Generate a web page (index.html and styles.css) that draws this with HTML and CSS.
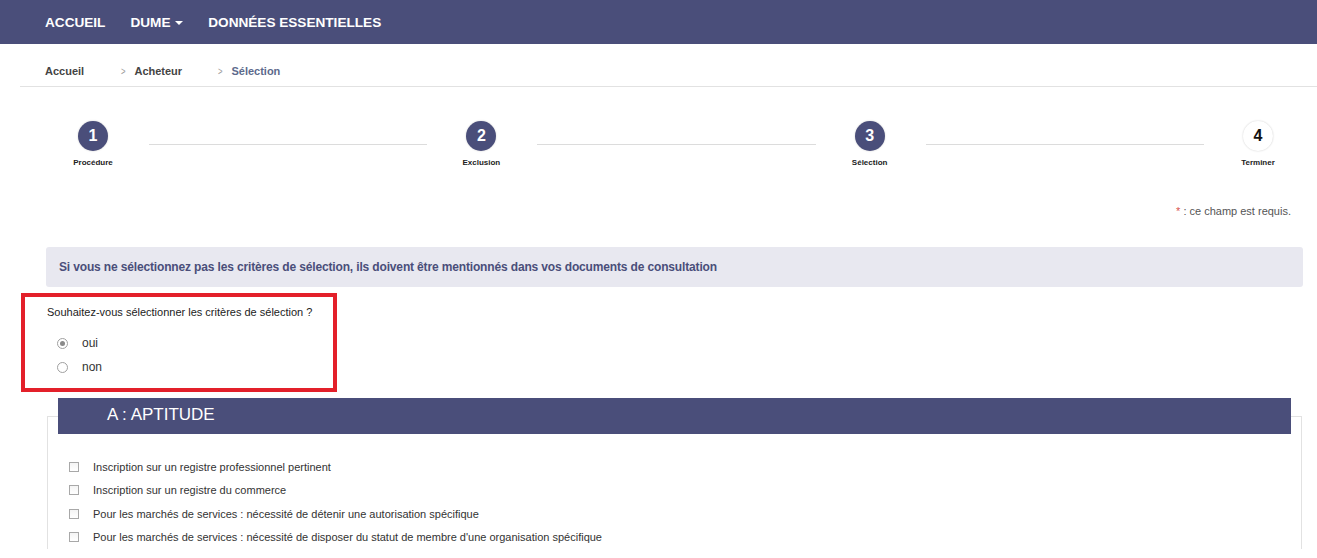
FILE: index.html
```html
<!DOCTYPE html>
<html lang="fr">
<head>
    <meta charset="UTF-8">
    <title>DUME - Sélection</title>
    <link rel="stylesheet" href="styles.css">
</head>
<body>
    <nav class="navbar">
        <a href="#">Accueil</a>
        <a href="#">Dume <span class="caret"></span></a>
        <a href="#">Données essentielles</a>
    </nav>

    <div class="page">
        <div class="breadcrumb">
            <span class="crumb">Accueil</span>
            <span class="crumb"><span class="sep">&gt;</span>Acheteur</span>
            <span class="crumb active"><span class="sep">&gt;</span>Sélection</span>
        </div>

        <div class="stepper">
            <div class="step done"><div class="circle">1</div><div class="step-label">Procédure</div></div>
            <div class="line"></div>
            <div class="step done"><div class="circle">2</div><div class="step-label">Exclusion</div></div>
            <div class="line"></div>
            <div class="step done"><div class="circle">3</div><div class="step-label">Sélection</div></div>
            <div class="line"></div>
            <div class="step"><div class="circle">4</div><div class="step-label">Terminer</div></div>
        </div>

        <p class="required-note"><span class="star">*</span> : ce champ est requis.</p>

        <div class="info">Si vous ne sélectionnez pas les critères de sélection, ils doivent être mentionnés dans vos documents de consultation</div>

        <div class="question">
            <p>Souhaitez-vous sélectionner les critères de sélection ?</p>
            <label class="radio"><input type="radio" name="sel" checked> oui</label>
            <label class="radio"><input type="radio" name="sel"> non</label>
        </div>

        <div class="section">
            <h3 class="section-title">A : APTITUDE</h3>
            <div class="criteria">
                <label class="check"><input type="checkbox"> Inscription sur un registre professionnel pertinent</label>
                <label class="check"><input type="checkbox"> Inscription sur un registre du commerce</label>
                <label class="check"><input type="checkbox"> Pour les marchés de services : nécessité de détenir une autorisation spécifique</label>
                <label class="check"><input type="checkbox"> Pour les marchés de services : nécessité de disposer du statut de membre d'une organisation spécifique</label>
            </div>
        </div>
    </div>
</body>
</html>
```

FILE: styles.css
```css
body {
    margin: 0;
    font-family: "Liberation Sans", Arial, sans-serif;
    color: #333;
    background: #fff;
}
.navbar {
    background-color: #4a4e7a;
    height: 44px;
    display: flex;
    align-items: center;
    padding-left: 45px;
    gap: 25px;
}
.navbar a {
    color: #fff;
    text-decoration: none;
    font-weight: bold;
    font-size: 13.6px;
    text-transform: uppercase;
    margin-top: 1px;
}
.caret {
    display: inline-block;
    width: 0;
    height: 0;
    border-left: 4px solid transparent;
    border-right: 4px solid transparent;
    border-top: 4px solid #fff;
    vertical-align: middle;
    margin-left: 1px;
}
.page {
    padding-left: 20px;
}
.breadcrumb {
    display: flex;
    box-sizing: border-box;
    height: 43px;
    padding: 21px 0 0 25px;
    border-bottom: 1px solid #e2e2e2;
    font-size: 11px;
    font-weight: bold;
    color: #444;
}
.crumb {
    width: 75px;
}
.crumb:nth-child(2) {
    width: 97px;
}
.crumb.active {
    color: #5d6a8c;
}
.sep {
    color: #999;
    font-weight: normal;
    margin-right: 8px;
    display: inline-block;
    transform: scaleX(0.7);
}
.stepper {
    display: flex;
    align-items: flex-start;
    margin: 34px 36px 0 50px;
}
.step {
    width: 46px;
    display: flex;
    flex-direction: column;
    align-items: center;
    flex: none;
}
.circle {
    width: 30px;
    height: 30px;
    border-radius: 50%;
    background: #fff;
    color: #111;
    font-weight: bold;
    font-size: 16px;
    display: flex;
    align-items: center;
    justify-content: center;
    box-shadow: 0 0 2px rgba(0,0,0,0.2);
}
.step.done .circle {
    background: #4a4e7a;
    color: #fff;
}
.step-label {
    font-size: 8px;
    font-weight: bold;
    color: #222;
    margin-top: 7px;
}
.line {
    flex: 1;
    height: 1px;
    background: #dcdcdc;
    margin: 23px 31px 0 33px;
}
.required-note {
    text-align: right;
    font-size: 11px;
    color: #555;
    margin: 38px 26px 0 0;
}
.star {
    color: #d9534f;
}
.info {
    margin: 30px 14px 0 26px;
    background: #e8e8f0;
    border-radius: 3px;
    padding: 13px 13px;
    font-size: 12px;
    font-weight: bold;
    color: #4a4e7a;
    letter-spacing: -0.15px;
}
.question {
    width: 286px;
    margin-top: 6px;
    margin-left: 1px;
    border: 4px solid #e3202a;
    padding: 9px 0 9px 22px;
}
.question p {
    margin: 0 0 13px;
    font-size: 11px;
    color: #222;
}
.radio {
    display: flex;
    align-items: center;
    font-size: 12px;
    color: #333;
    margin-left: 10px;
    height: 24px;
}
.radio input {
    appearance: none;
    margin: 0 14px 0 0;
    width: 11px;
    height: 11px;
    border: 1px solid #a0a0a0;
    border-radius: 50%;
    background: #fff;
    position: relative;
}
.radio input:checked::after {
    content: "";
    position: absolute;
    top: 2px;
    left: 2px;
    width: 5px;
    height: 5px;
    border-radius: 50%;
    background: #8a8a8a;
}
.section {
    margin: 6px 15px 0 27px;
    position: relative;
    padding-top: 18px;
}
.section::before {
    content: "";
    position: absolute;
    top: 18px;
    left: 0;
    right: 0;
    bottom: -20px;
    border: 1px solid #e2e2e2;
    pointer-events: none;
}
.section-title {
    position: relative;
    margin: -18px 11px 0 11px;
    background: #4a4e7a;
    color: #fff;
    font-weight: normal;
    font-size: 17px;
    height: 36px;
    line-height: 34px;
    padding-left: 49px;
}
.criteria {
    padding: 21px 0 0 22px;
}
.check {
    display: flex;
    align-items: center;
    height: 23.5px;
    font-size: 11px;
    color: #333;
}
.check input {
    appearance: none;
    margin: 0 14px 0 0;
    width: 10px;
    height: 10px;
    border: 1px solid #a8a8a8;
    background: linear-gradient(#f4f4f4, #fff);
}
```
